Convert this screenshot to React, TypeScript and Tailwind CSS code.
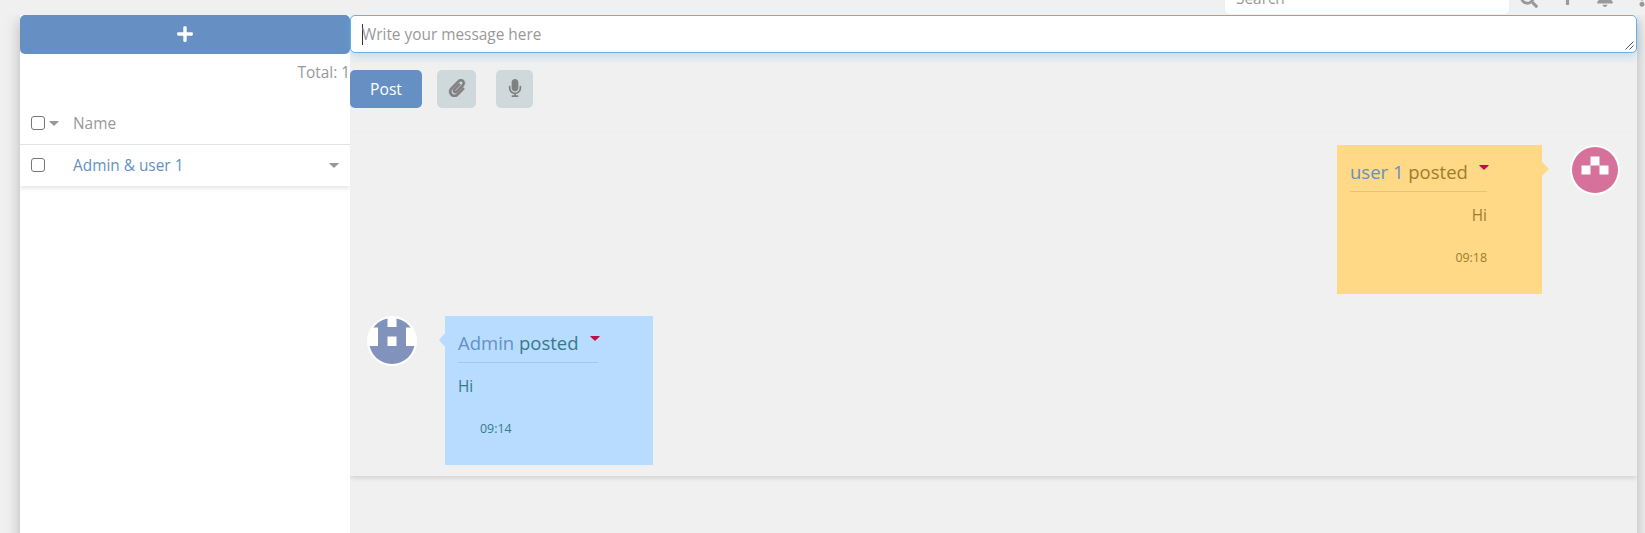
import React from "react";
import { FaPlus, FaPaperclip, FaMicrophone, FaSearch, FaBell, FaEllipsisV } from "react-icons/fa";

function Caret({ className }: { className: string }) {
  return (
    <svg viewBox="0 0 10 5" className={className} fill="currentColor">
      <path d="M.5 0h9Q10 .4 9.500 .8L5.500 4.600Q5 5 4.500 4.600L.5 .8Q0 .4 .5 0z" />
    </svg>
  );
}

function TopBar() {
  return (
    <header className="flex h-[15px] items-end overflow-hidden text-[#999]">
      <div className="mb-[1px] ml-[1225px] flex h-[38px] w-[284px] shrink-0 items-center rounded-[5px] bg-white pl-[11px]">
        <span className="pt-[8px]">Search</span>
      </div>
      <FaSearch className="mb-[7px] ml-[11px] size-[18px] shrink-0" />
      <FaPlus className="mb-[9px] ml-[21px] size-[17px] shrink-0" />
      <FaBell className="mb-[8px] ml-[20px] size-[18px] shrink-0" />
      <FaEllipsisV className="mb-[8px] ml-[19px] size-[18px] shrink-0" />
    </header>
  );
}

function Box() {
  return <span className="size-[14px] shrink-0 rounded-[3px] border-[1.5px] border-[#767676] bg-white" />;
}

function Sidebar() {
  return (
    <aside className="w-[330px] shrink-0 bg-white text-[#999]">
      <button className="flex h-[39px] w-full items-center justify-center rounded-[5px] bg-[#6690c4] pb-[2px] text-white">
        <FaPlus className="size-[18px]" />
      </button>
      <div className="h-[48px] pt-[7px] text-right leading-6">Total: 1</div>
      <div className="shadow-[0_2px_5px_rgba(0,0,0,0.12)] [clip-path:inset(0_0_-10px_0)]">
        <div className="flex h-[43px] items-center border-b border-[#dfe4e4] pl-[11px]">
          <Box />
          <Caret className="ml-[4px] h-[5px] w-[10px]" />
          <span className="ml-[14px] pt-[2px]">Name</span>
        </div>
        <div className="flex h-[41px] items-center pr-[11px] pb-[2px] pl-[11px]">
          <Box />
          <span className="ml-[28px] flex-1 pt-[2px] text-[#6690c4]">Admin &amp; user 1</span>
          <Caret className="mt-px h-[5px] w-[10px]" />
        </div>
      </div>
    </aside>
  );
}

function Composer() {
  return (
    <div className="h-[117px]">
      <div className="relative flex h-[38px] items-center rounded-[5px] border border-[#66afe9] bg-white pl-[11px] text-[#999] shadow-[0_4px_8px_rgba(102,175,233,0.3)]">
        <span className="h-[21px] w-px bg-[#333]" />
        <span className="-ml-px pt-[2px]">Write your message here</span>
        <svg viewBox="0 0 9 9" className="absolute right-[2px] bottom-[2px] size-[9px]" stroke="#555" fill="none">
          <path d="M.5 8.5l8-8M4.5 8.5l4-4" />
        </svg>
      </div>
      <div className="mt-[17px] flex h-[38px]">
        <button className="w-[72px] rounded-[5px] bg-[#6690c4] pt-[2px] text-[15.7px] text-white">Post</button>
        <button className="ml-[15px] flex w-[39px] items-center justify-center rounded-[5px] bg-[#cfd8da] pb-[2px] text-[#808080]">
          <FaPaperclip className="size-[18px]" stroke="currentColor" strokeWidth="14" />
        </button>
        <button className="ml-[20px] flex w-[37px] items-center justify-center rounded-[5px] bg-[#cfd8da] pb-[2px] text-[#808080]">
          <FaMicrophone className="size-[18px]" />
        </button>
      </div>
    </div>
  );
}

function OutgoingMessage() {
  return (
    <div className="flex justify-end pr-[17px]">
      <div className="relative h-[149px] w-[205px] bg-[#ffd985] pt-[12px] pl-[13px] text-[#9f7d2c]">
        <span className="absolute top-[17px] left-full h-[14px] w-[7px] bg-[#ffd985] [clip-path:polygon(0_0,100%_50%,0_100%)]" />
        <div className="flex h-[35px] w-[137px] border-b border-[#e7c27b] text-[18.5px] leading-[29px] whitespace-nowrap">
          <span><span className="text-[#6690c4]">user 1</span> posted</span>
          <Caret className="mt-[8px] ml-[11px] h-[5px] w-[10px] shrink-0 text-[#c20c48]" />
        </div>
        <div className="mt-[12px] w-[137px] text-right leading-6">Hi</div>
        <div className="mt-[20px] w-[137px] text-right text-[12.4px] leading-5">09:18</div>
      </div>
      <svg viewBox="0 0 50 50" className="ml-[28px] size-[50px]">
        <circle cx="25" cy="25" r="25" fill="#fff" />
        <circle cx="25" cy="25" r="23" fill="#d5719b" />
        <path fill="#fff" d="M20.5 11.5h9v9h-9zM11.5 20.5h9v9h-9zM29.5 20.5h9v9h-9z" />
      </svg>
    </div>
  );
}

function IncomingMessage() {
  return (
    <div className="mt-[22px] flex pl-[17px]">
      <svg viewBox="0 0 50 50" className="size-[50px]">
        <defs>
          <clipPath id="avatar"><circle cx="25" cy="25" r="23" /></clipPath>
        </defs>
        <circle cx="25" cy="25" r="25" fill="#fff" />
        <path clipPath="url(#avatar)" fill="#8193bd" d="M0 0h20.500v11h9V0H50v11.500H39V30h11v20H0V30h11V11.500H0zM20.500 20.500V30h9v-9.500z" fillRule="evenodd" />
      </svg>
      <div className="relative ml-[28px] h-[149px] w-[208px] bg-[#b8dcff] pt-[12px] pl-[13px] text-[#377a87]">
        <span className="absolute top-[17px] right-full h-[14px] w-[6px] bg-[#b8dcff] [clip-path:polygon(100%_0,100%_100%,0_50%)]" />
        <div className="flex h-[35px] w-[140px] border-b border-[#a5c6ea] text-[18.5px] leading-[29px] whitespace-nowrap">
          <span><span className="text-[#6690c4]">Admin</span> posted</span>
          <Caret className="mt-[8px] ml-[11px] h-[5px] w-[10px] shrink-0 text-[#c20c48]" />
        </div>
        <div className="mt-[12px] leading-6">Hi</div>
        <div className="mt-[20px] pl-[22px] text-[12.4px] leading-5">09:14</div>
      </div>
    </div>
  );
}

export default function App() {
  return (
    <div className="h-[533px] overflow-hidden bg-[#f0f0f0] font-['Open_Sans',sans-serif] text-[15.4px]">
      <TopBar />
      <div className="h-[518px] overflow-hidden pr-[8px] pl-[20px]">
        <div className="flex h-[560px] bg-[#f0f0f0] shadow-[0_6px_14px_rgba(0,0,0,0.25)]">
          <Sidebar />
          <main className="min-w-0 flex-1">
            <Composer />
            <section className="h-[344px] border-t border-[#ededed] pt-[12px] shadow-[0_2px_5px_rgba(0,0,0,0.13)] [clip-path:inset(0_0_-10px_0)]">
              <OutgoingMessage />
              <IncomingMessage />
            </section>
          </main>
        </div>
      </div>
    </div>
  );
}
